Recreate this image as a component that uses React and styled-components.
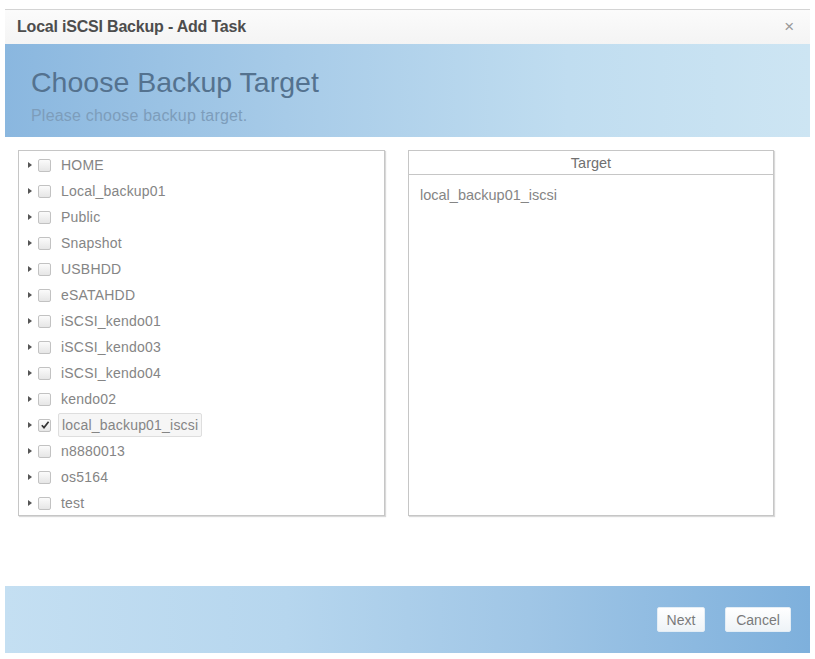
import React from 'react';
import styled, { createGlobalStyle } from 'styled-components';

const GlobalStyle = createGlobalStyle`
  html, body { margin: 0; padding: 0; background: #fff; }
  body { font-family: "Liberation Sans", Arial, sans-serif; }
`;

const Dialog = styled.div`
  margin: 9px 5px 0;
  width: 805px;
  border-top: 1px solid #d4d4d4;
  display: flex;
  flex-direction: column;
`;

const TitleBar = styled.div`
  height: 34px;
  padding: 0 12px;
  display: flex;
  align-items: center;
  justify-content: space-between;
  background: linear-gradient(#fbfbfb, #f4f4f4);
  color: #4d4d4d;
  font-size: 16px;
  font-weight: bold;
  letter-spacing: -0.2px;
`;

const CloseButton = styled.span`
  font-size: 17px;
  font-weight: normal;
  color: #9a9a9a;
  margin-right: 4px;
`;

const Banner = styled.div`
  height: 93px;
  padding: 0 26px;
  display: flex;
  flex-direction: column;
  justify-content: center;
  background: linear-gradient(90deg, #8ab7df 0%, #a7cbe8 35%, #c0ddf0 70%, #cde5f3 100%);
`;

const BannerTitle = styled.div`
  font-size: 28.5px;
  color: #54728f;
  margin-top: 9px;
`;

const BannerSub = styled.div`
  font-size: 16px;
  color: #7d9dbb;
  margin-top: 8px;
  letter-spacing: 0.2px;
`;

const Body = styled.div`
  padding: 13px 13px 0;
  height: 436px;
  display: flex;
  gap: 23px;
`;

const Panel = styled.div`
  width: ${p => p.w}px;
  height: 364px;
  border: 1px solid #c6c6c6;
  box-shadow: 1px 1px 1px rgba(0, 0, 0, 0.15);
  background: #fff;
  display: flex;
  flex-direction: column;
`;

const TreeList = styled.ul`
  list-style: none;
  margin: 0;
  padding: 1px 0 0 8px;
`;

const TreeRow = styled.li`
  height: 26px;
  display: flex;
  align-items: center;
`;

const Arrow = styled.span`
  width: 0;
  height: 0;
  border-top: 3px solid transparent;
  border-bottom: 3px solid transparent;
  border-left: 4px solid #555;
  margin-left: 1px;
  margin-right: 6px;
`;

const Check = styled.span`
  width: 11px;
  height: 11px;
  border: 1px solid #c2c2c2;
  border-radius: 2px;
  background: linear-gradient(#fbfbfb, #e6e6e6);
  display: flex;
  align-items: center;
  justify-content: center;
  margin-right: ${p => (p.checked ? 7 : 10)}px;
`;

const Label = styled.span`
  font-size: 14px;
  color: #858585;
  letter-spacing: 0.2px;
  padding: ${p => (p.selected ? '3px 3px' : '0')};
  border: ${p => (p.selected ? '1px solid #dedede' : 'none')};
  background: ${p => (p.selected ? '#f6f6f6' : 'transparent')};
  border-radius: 2px;
`;

const PanelHeader = styled.div`
  height: 23px;
  border-bottom: 1px solid #c6c6c6;
  display: flex;
  align-items: center;
  justify-content: center;
  font-size: 14.5px;
  color: #707070;
`;

const PanelContent = styled.div`
  padding: 12px 11px;
  font-size: 14.5px;
  color: #858585;
`;

const Footer = styled.div`
  height: 67px;
  padding: 0 19px;
  display: flex;
  align-items: center;
  justify-content: flex-end;
  gap: 20px;
  background: linear-gradient(90deg, #c4dff2 0%, #b6d6ee 35%, #a0c6e6 65%, #7eb0dc 100%);
`;

const Button = styled.button`
  height: 25px;
  width: ${p => p.w}px;
  padding: 0;
  border: 1px solid #e3edf5;
  border-radius: 2px;
  background: linear-gradient(#ffffff, #eef3f7);
  font-family: "Liberation Sans", Arial, sans-serif;
  font-size: 14px;
  color: #7a7a7a;
`;

const folders = [
  'HOME', 'Local_backup01', 'Public', 'Snapshot', 'USBHDD', 'eSATAHDD',
  'iSCSI_kendo01', 'iSCSI_kendo03', 'iSCSI_kendo04', 'kendo02',
  'local_backup01_iscsi', 'n8880013', 'os5164', 'test',
];

const selected = 'local_backup01_iscsi';

export default function App() {
  return (
    <>
      <GlobalStyle />
      <Dialog>
        <TitleBar>
          <span>Local iSCSI Backup - Add Task</span>
          <CloseButton>×</CloseButton>
        </TitleBar>
        <Banner>
          <BannerTitle>Choose Backup Target</BannerTitle>
          <BannerSub>Please choose backup target.</BannerSub>
        </Banner>
        <Body>
          <Panel w={365}>
            <TreeList>
              {folders.map(name => {
                const on = name === selected;
                return (
                  <TreeRow key={name}>
                    <Arrow />
                    <Check checked={on}>
                      {on && (
                        <svg width="10" height="10" viewBox="0 0 10 10">
                          <path d="M1.8 5.2 L4 7.6 L8.6 1.8" fill="none" stroke="#333" strokeWidth="1.7" />
                        </svg>
                      )}
                    </Check>
                    <Label selected={on}>{name}</Label>
                  </TreeRow>
                );
              })}
            </TreeList>
          </Panel>
          <Panel w={364}>
            <PanelHeader>Target</PanelHeader>
            <PanelContent>{selected}</PanelContent>
          </Panel>
        </Body>
        <Footer>
          <Button w={48}>Next</Button>
          <Button w={66}>Cancel</Button>
        </Footer>
      </Dialog>
    </>
  );
}
